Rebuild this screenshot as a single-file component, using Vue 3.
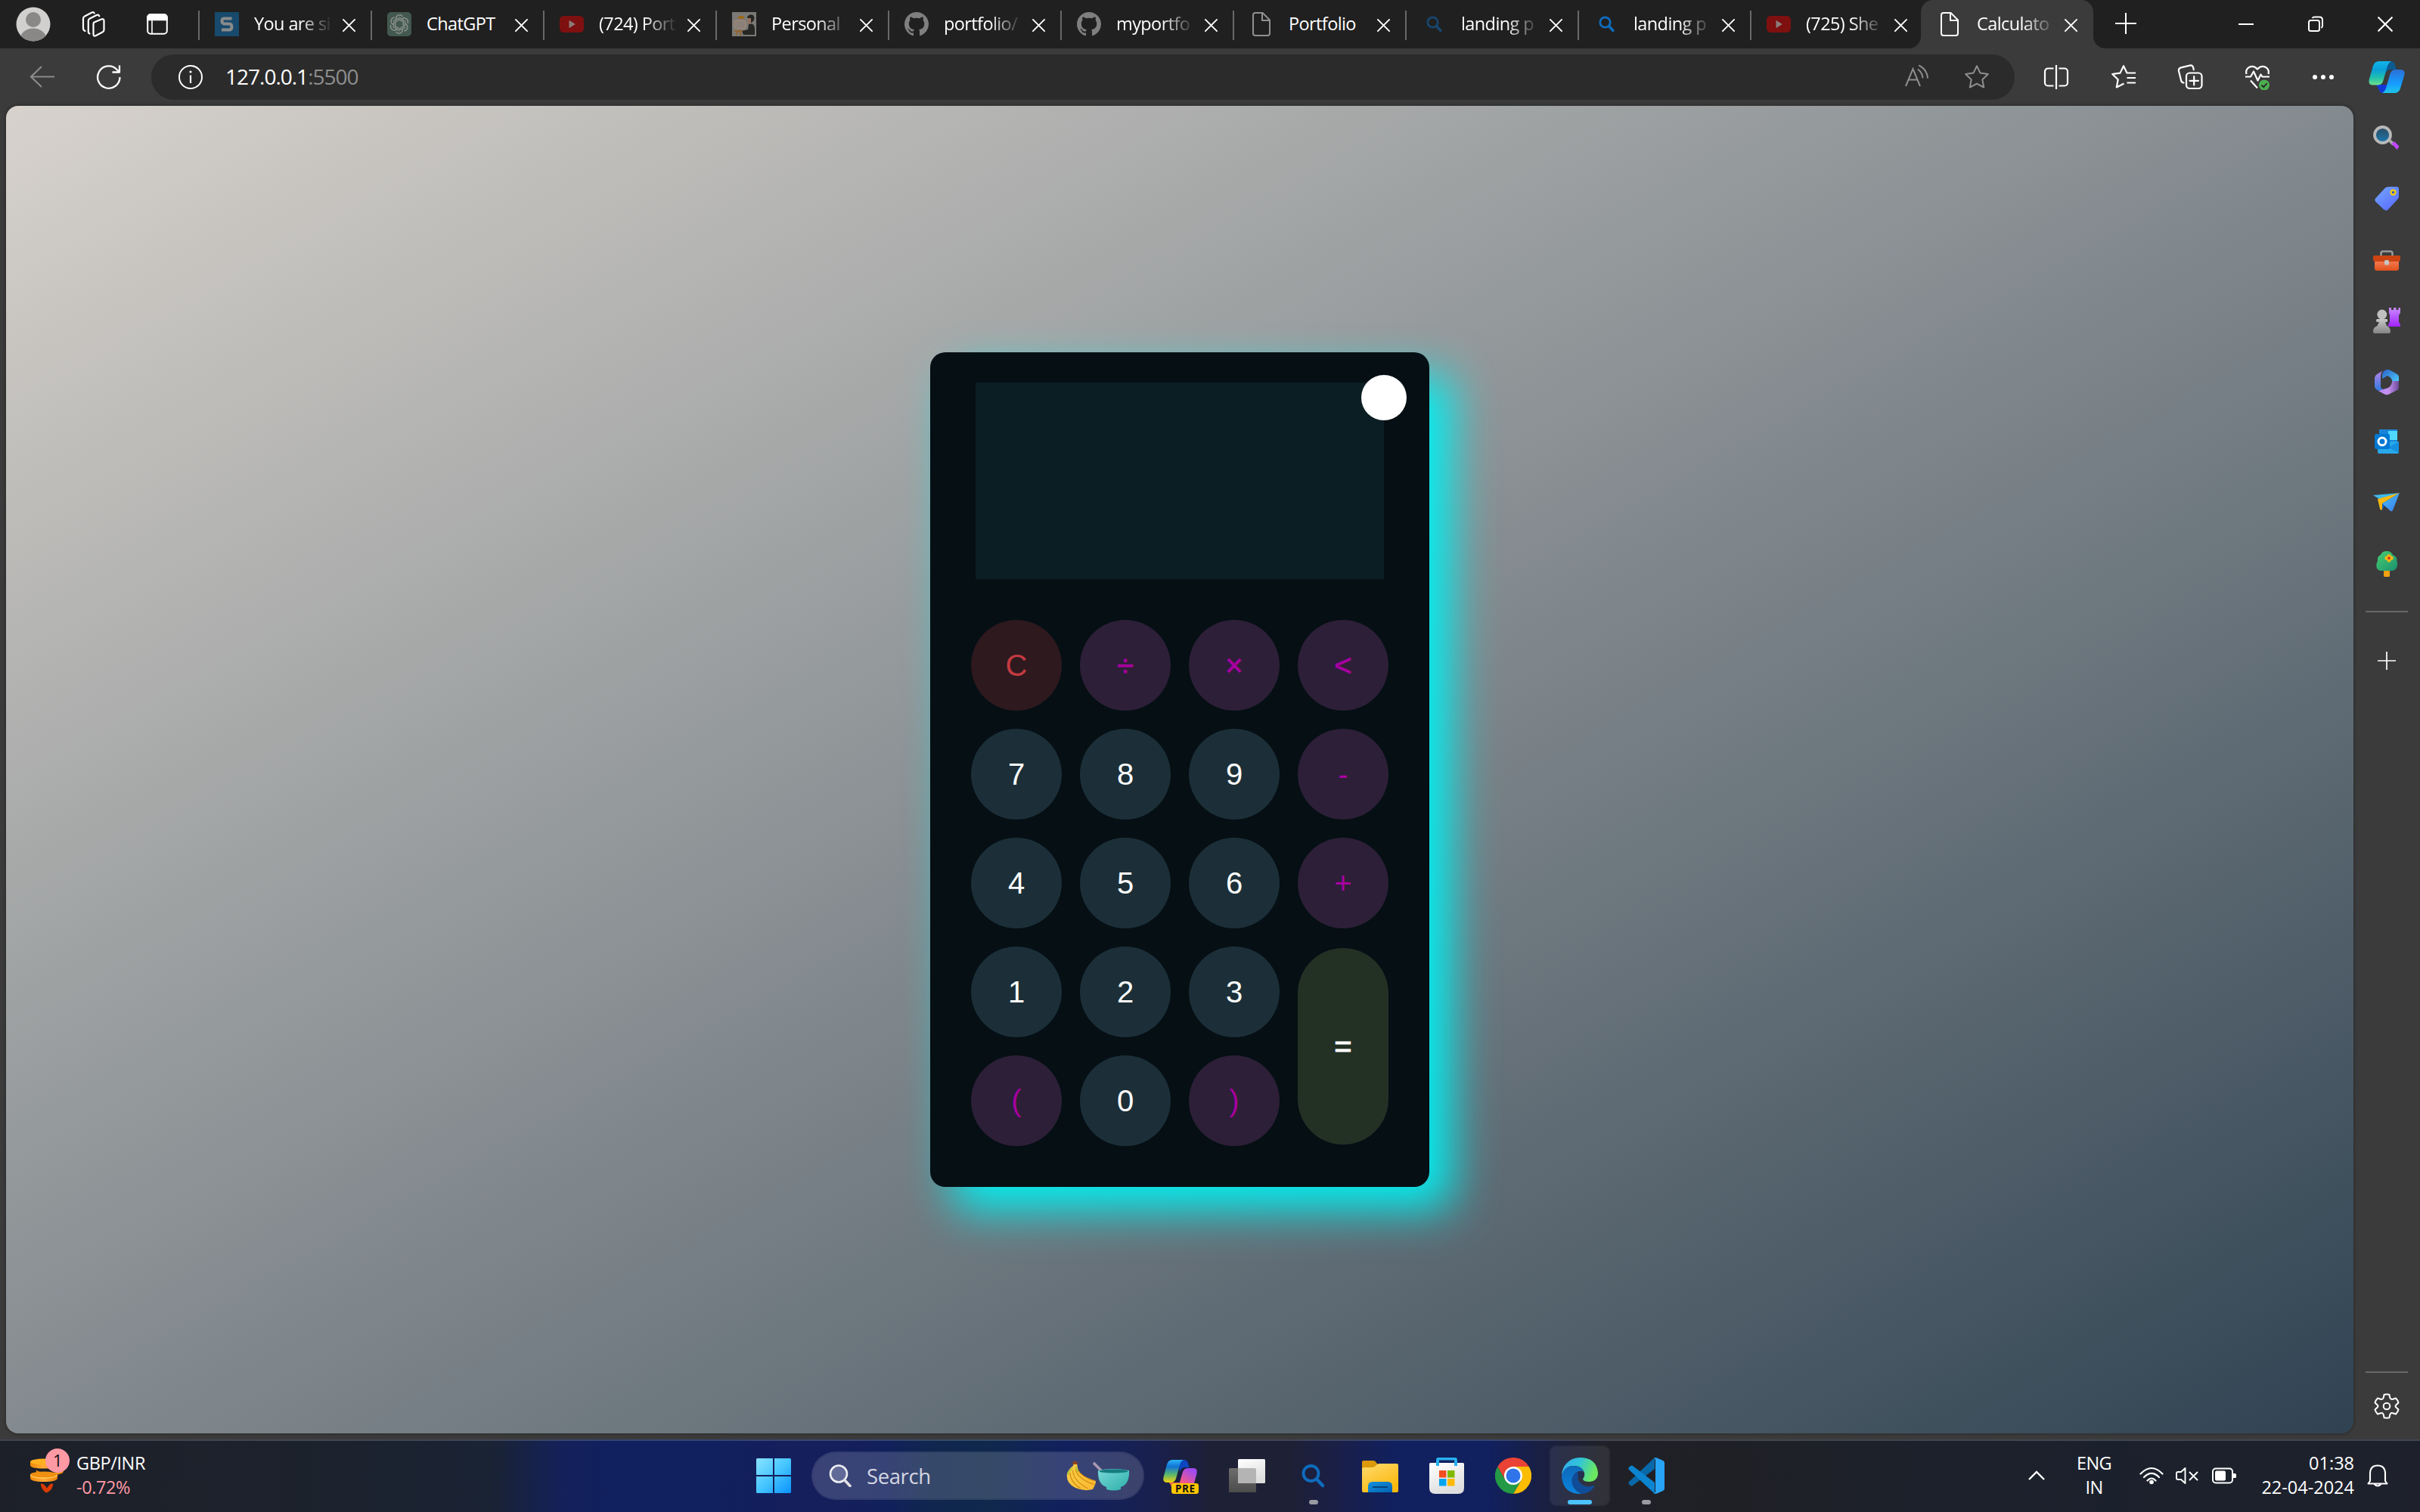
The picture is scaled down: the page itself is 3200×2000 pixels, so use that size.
<script setup>
const tabs = [
  { title: 'You are si', icon: 'fav-s' },
  { title: 'ChatGPT', icon: 'fav-gpt' },
  { title: '(724) Port', icon: 'fav-yt' },
  { title: 'Personal', icon: 'fav-person' },
  { title: 'portfolio/', icon: 'fav-github' },
  { title: 'myportfo', icon: 'fav-github' },
  { title: 'Portfolio', icon: 'fav-page', dim: true },
  { title: 'landing p', icon: 'fav-search', dim: true },
  { title: 'landing p', icon: 'fav-search' },
  { title: '(725) She', icon: 'fav-yt' },
  { title: 'Calculato', icon: 'fav-page', active: true }
]

const keys = [
  { label: 'C', kind: 'clear' },
  { label: '÷', kind: 'op heavy' },
  { label: '×', kind: 'op heavy' },
  { label: '<', kind: 'op heavy' },
  { label: '7' },
  { label: '8' },
  { label: '9' },
  { label: '-', kind: 'op' },
  { label: '4' },
  { label: '5' },
  { label: '6' },
  { label: '+', kind: 'op' },
  { label: '1' },
  { label: '2' },
  { label: '3' },
  { label: '=', kind: 'equals heavy' },
  { label: '(', kind: 'op' },
  { label: '0' },
  { label: ')', kind: 'op' }
]

const sideApps = ['side-search', 'side-tag', 'side-case', 'side-chess', 'side-m365', 'side-outlook', 'side-plane', 'side-tree']

const taskApps = [
  { icon: 'task-copilot' },
  { icon: 'task-view' },
  { icon: 'task-search', running: true },
  { icon: 'task-folder' },
  { icon: 'task-store' },
  { icon: 'task-chrome' },
  { icon: 'task-edge', active: true },
  { icon: 'task-code', running: true }
]
</script>

<template>
  <div class="screen">
    <svg class="sprite" aria-hidden="true">
      <defs>
        <linearGradient id="g-cop1" x1="0" y1="0" x2="0" y2="1">
          <stop offset="0" stop-color="#12b5ea" /><stop offset=".35" stop-color="#0a9ed8" /><stop offset=".7" stop-color="#22c1ac" /><stop offset="1" stop-color="#6fe08a" />
        </linearGradient>
        <linearGradient id="g-cop2" x1="0" y1="0" x2="0" y2="1">
          <stop offset="0" stop-color="#2b6fd6" /><stop offset=".6" stop-color="#159cff" /><stop offset="1" stop-color="#1fc4e8" />
        </linearGradient>
        <linearGradient id="g-pre1" x1="0" y1="0" x2="0" y2="1">
          <stop offset="0" stop-color="#2bb4f5" /><stop offset=".3" stop-color="#1173d6" /><stop offset=".65" stop-color="#5bb86c" /><stop offset="1" stop-color="#f5d00a" />
        </linearGradient>
        <linearGradient id="g-pre2" x1="0" y1="1" x2=".6" y2="0">
          <stop offset="0" stop-color="#ff8a4a" /><stop offset=".45" stop-color="#f0588c" /><stop offset="1" stop-color="#a04bf0" />
        </linearGradient>
        <linearGradient id="g-purple" x1="0" y1="0" x2="0" y2="1">
          <stop offset="0" stop-color="#c88cff" /><stop offset="1" stop-color="#a222ff" />
        </linearGradient>
        <linearGradient id="g-tag" x1="0" y1="0" x2=".8" y2="1">
          <stop offset="0" stop-color="#74a8ff" /><stop offset="1" stop-color="#5a6cff" />
        </linearGradient>
        <linearGradient id="g-case" x1="0" y1="0" x2="0" y2="1">
          <stop offset="0" stop-color="#f58058" /><stop offset="1" stop-color="#e0501c" />
        </linearGradient>
        <linearGradient id="g-gray" x1="0" y1="0" x2="0" y2="1">
          <stop offset="0" stop-color="#c8c8c8" /><stop offset="1" stop-color="#848484" />
        </linearGradient>
        <linearGradient id="g-lens" x1="0" y1="0" x2="0" y2="1">
          <stop offset="0" stop-color="#2c4a60" /><stop offset="1" stop-color="#1a78b0" />
        </linearGradient>
        <linearGradient id="g-m1" x1="0" y1="0" x2="0" y2="1">
          <stop offset="0" stop-color="#b87fe8" /><stop offset="1" stop-color="#2f7ce0" />
        </linearGradient>
        <linearGradient id="g-m2" x1="0" y1="0" x2="1" y2="1">
          <stop offset="0" stop-color="#2a60c8" /><stop offset="1" stop-color="#4fd8ff" />
        </linearGradient>
        <linearGradient id="g-m3" x1="0" y1="0" x2="1" y2="0">
          <stop offset="0" stop-color="#b88af5" /><stop offset=".5" stop-color="#c590f0" /><stop offset="1" stop-color="#6a4a98" />
        </linearGradient>
        <linearGradient id="g-tree" x1="0" y1="0" x2="1" y2="1">
          <stop offset="0" stop-color="#48d070" /><stop offset="1" stop-color="#1a9070" />
        </linearGradient>
        <linearGradient id="g-plane" x1="0" y1="0" x2="1" y2="1">
          <stop offset="0" stop-color="#48c4f0" /><stop offset="1" stop-color="#3a78f0" />
        </linearGradient>
        <linearGradient id="g-win" gradientUnits="userSpaceOnUse" x1="0" y1="0" x2="46" y2="46">
          <stop offset="0" stop-color="#8ae2ff" /><stop offset=".5" stop-color="#46c6ff" /><stop offset="1" stop-color="#0a92ff" />
        </linearGradient>
        <linearGradient id="g-folder" x1="0" y1="0" x2=".6" y2="1">
          <stop offset="0" stop-color="#ffdc70" /><stop offset="1" stop-color="#fbb80c" />
        </linearGradient>
        <linearGradient id="g-folder2" x1="0" y1="0" x2="1" y2="1">
          <stop offset="0" stop-color="#1592dc" /><stop offset="1" stop-color="#0462b4" />
        </linearGradient>
        <linearGradient id="g-store" x1="0" y1="0" x2=".4" y2="1">
          <stop offset="0" stop-color="#ffffff" /><stop offset="1" stop-color="#dedede" />
        </linearGradient>
        <linearGradient id="g-edge1" x1="0" y1="0" x2="1" y2=".3">
          <stop offset="0" stop-color="#35a8ee" /><stop offset=".5" stop-color="#30c4d8" /><stop offset="1" stop-color="#6be860" />
        </linearGradient>
        <linearGradient id="g-edge2" x1="0" y1="0" x2="0" y2="1">
          <stop offset="0" stop-color="#0f68b8" /><stop offset="1" stop-color="#0a84e0" />
        </linearGradient>
        <linearGradient id="g-bowl" x1="0" y1="0" x2="1" y2="1">
          <stop offset="0" stop-color="#78d8d8" /><stop offset="1" stop-color="#2eb0a8" />
        </linearGradient>
        <linearGradient id="g-banana" x1="0" y1="0" x2="1" y2="1">
          <stop offset="0" stop-color="#f8d048" /><stop offset="1" stop-color="#f8b830" />
        </linearGradient>
        <linearGradient id="g-coin" x1="0" y1="0" x2="1" y2="0">
          <stop offset="0" stop-color="#f08808" /><stop offset=".5" stop-color="#ffac38" /><stop offset="1" stop-color="#e88008" />
        </linearGradient>
        <linearGradient id="g-tv" x1="0" y1="0" x2="0" y2="1">
          <stop offset="0" stop-color="#6c6c6c" /><stop offset="1" stop-color="#4c4c4c" />
        </linearGradient>
      </defs>

      <symbol id="fav-s" viewBox="0 0 32 32">
        <rect width="32" height="32" fill="#174a6c" />
        <path d="M22.500 8.500H12.500q-3 0-3 3.200t3 3.800h6.500q3.500 0 3.500 4t-3.500 4H9" fill="none" stroke="#8a8a8a" stroke-width="4" />
      </symbol>
      <symbol id="fav-gpt" viewBox="0 0 32 32">
        <rect width="32" height="32" rx="5" fill="#43594f" />
        <g fill="none" stroke="#858c8a" stroke-width="1.600">
          <path id="petal" d="M20.500 12.500l-5.800-3.400q-1-.6-2 0L8 12M11.600 9.800V8.500a5 5 0 0 1 9-2.600" />
          <use href="#petal" transform="rotate(60 16 16)" />
          <use href="#petal" transform="rotate(120 16 16)" />
          <use href="#petal" transform="rotate(180 16 16)" />
          <use href="#petal" transform="rotate(240 16 16)" />
          <use href="#petal" transform="rotate(300 16 16)" />
        </g>
      </symbol>
      <symbol id="fav-yt" viewBox="0 0 32 32">
        <rect y="5" width="32" height="22" rx="5.500" fill="#7e1010" />
        <path d="M12.500 10.800v10.400l8.300-5.200z" fill="#8c7c7c" />
      </symbol>
      <symbol id="fav-person" viewBox="0 0 32 32">
        <rect width="32" height="32" fill="#7c7a76" />
        <rect x="8" y="5" width="8" height="4" rx="2" fill="#9b6a18" />
        <rect x="3" y="11" width="15" height="11" rx="2" fill="#8c8078" stroke="#a48c78" stroke-width="1" />
        <path d="M20 6q3-4 8-2 3 4 0 8-3 3-5 2z" fill="#282624" />
        <path d="M21 8h4v7h-4z" fill="#98735c" />
        <path d="M22 16q7-2 8 5v9H15l-2-5 8-2z" fill="#262624" />
        <path d="M3 25h11M8 25l-3 6M11 25v6" stroke="#9a6020" stroke-width="1.500" />
      </symbol>
      <symbol id="fav-github" viewBox="0 0 16 16">
        <path fill="#7f7f7f" d="M8 0C3.580 0 0 3.580 0 8c0 3.540 2.290 6.530 5.470 7.590.4.070.55-.17.55-.38 0-.19-.01-.82-.01-1.490-2.010.37-2.530-.49-2.690-.94-.09-.23-.48-.94-.82-1.130-.28-.15-.68-.52-.01-.53.63-.01 1.080.58 1.230.82.72 1.210 1.870.87 2.330.66.070-.52.28-.87.51-1.070-1.780-.2-3.640-.89-3.640-3.950 0-.87.31-1.590.82-2.150-.08-.2-.36-1.020.08-2.120 0 0 .67-.21 2.200.82.64-.18 1.320-.27 2-.27s1.360.09 2 .27c1.530-1.040 2.200-.82 2.200-.82.44 1.100.16 1.920.08 2.120.51.56.82 1.270.82 2.150 0 3.070-1.870 3.750-3.650 3.950.29.25.54.73.54 1.480 0 1.070-.01 1.930-.01 2.200 0 .21.15.46.55.38A8.010 8.010 0 0 0 16 8c0-4.420-3.580-8-8-8z" />
      </symbol>
      <symbol id="fav-page" viewBox="0 0 32 32">
        <path d="M8 1h9.500L27 10.500V28a3 3 0 0 1-3 3H8a3 3 0 0 1-3-3V4a3 3 0 0 1 3-3zM17 1.500V11h9.500" fill="none" stroke="currentColor" stroke-width="2" stroke-linejoin="round" />
      </symbol>
      <symbol id="fav-search" viewBox="0 0 32 32">
        <circle cx="14.500" cy="13.500" r="6.700" fill="none" stroke="#0f6cbd" stroke-width="2.800" />
        <path d="M19.500 18.500l5.500 6" stroke="#0f6cbd" stroke-width="3.400" stroke-linecap="round" />
      </symbol>

      <symbol id="workspaces" viewBox="0 0 36 36">
        <g fill="none" stroke="#fff" stroke-width="2.200" stroke-linejoin="round" stroke-linecap="round">
          <path d="M19.500 15.500l9.500-4q3.500-1.200 3.500 2v12q0 2-2 3l-9 4.700q-3 1.200-3-2V18q0-1.800 1-2.500z" />
          <path d="M13.500 30.500q-1.700-.5-1.700-3V13.500q0-2 2-3l9-4.500q2.800-1 3.500 1.500" />
          <path d="M7.500 27q-2.500-1-2.500-4V10.500q0-2 2-3l9.500-5q2.500-1 3.200 1" />
        </g>
      </symbol>
      <symbol id="tab-actions" viewBox="0 0 28 28">
        <rect x="1.200" y="1.200" width="25.600" height="25.600" rx="4" fill="none" stroke="#fff" stroke-width="2" />
        <path d="M1 8.500V5a4 4 0 0 1 4-4h18a4 4 0 0 1 4 4v3.500zM7 8v19" fill="#fff" stroke="#fff" stroke-width="1.600" />
      </symbol>
      <symbol id="cross" viewBox="0 0 20 20">
        <path d="M2 2l16 16M18 2L2 18" stroke="#fff" stroke-width="2" stroke-linecap="round" />
      </symbol>
      <symbol id="plus" viewBox="0 0 28 28">
        <path d="M14 0v28M0 14h28" stroke="#fff" stroke-width="2" />
      </symbol>
      <symbol id="restore" viewBox="0 0 22 22">
        <g fill="none" stroke="#fff" stroke-width="2">
          <rect x="2" y="6" width="14" height="14" rx="2.500" />
          <path d="M6.500 3q1-1.500 3-1.500H16q4 0 4 4V13q0 2-1.500 3" />
        </g>
      </symbol>

      <symbol id="back" viewBox="0 0 34 32">
        <path d="M33 15.500H2M16 2L2 15.500 16 29" fill="none" stroke="#8a8a8a" stroke-width="2.200" />
      </symbol>
      <symbol id="reload" viewBox="0 0 34 34">
        <path d="M31.500 17A14.700 14.700 0 1 1 27.500 7l3 3M31 1.500v9h-9.500" fill="none" stroke="#fff" stroke-width="2.300" stroke-linejoin="round" />
      </symbol>
      <symbol id="info" viewBox="0 0 34 34">
        <circle cx="17" cy="17" r="15" fill="none" stroke="#fff" stroke-width="2" />
        <path d="M17 14.500V25" stroke="#fff" stroke-width="2.200" />
        <circle cx="17" cy="10" r="1.600" fill="#fff" />
      </symbol>
      <symbol id="read-aloud" viewBox="0 0 34 34">
        <g fill="none" stroke="#8e8e8e" stroke-width="2">
          <path d="M2 29L11.500 6 21 29M5.500 20.500h12" />
          <path d="M18.500 7q5 3.800 6 10.500M20 1.800q10 5.200 11 16" stroke-linecap="round" />
        </g>
      </symbol>
      <symbol id="star" viewBox="0 0 34 34">
        <path d="M17 2.200l4.500 9.400 10.300 1.400-7.500 7.200 1.900 10.300L17 25.600l-9.200 4.900 1.900-10.300-7.500-7.200 10.300-1.400z" fill="none" stroke="#8e8e8e" stroke-width="2" stroke-linejoin="round" />
      </symbol>
      <symbol id="split" viewBox="0 0 34 34">
        <g fill="none" stroke="#fff" stroke-width="2.200">
          <path d="M17 1v32M13.500 5.500H6a4 4 0 0 0-4 4v15a4 4 0 0 0 4 4h7.500M20.500 5.500H28a4 4 0 0 1 4 4v15a4 4 0 0 1-4 4h-7.500" />
        </g>
      </symbol>
      <symbol id="favorites" viewBox="0 0 34 34">
        <g fill="none" stroke="#fff" stroke-width="2.200" stroke-linejoin="round">
          <path d="M33 11.500H21.500L17 2.200l-4.500 9.400L2.200 13l7.500 7.200-1.900 10.300L17.500 25.500M21.500 18H33M21.500 24.500H33" />
        </g>
      </symbol>
      <symbol id="collections" viewBox="0 0 34 34">
        <g fill="none" stroke="#fff" stroke-width="2.200" stroke-linejoin="round" stroke-linecap="round">
          <rect x="12" y="11.500" width="20.500" height="20.500" rx="4.500" />
          <path d="M22.200 16v11.500M16.500 21.800H28M8.500 24.500q-3-.5-3.500-3.500L2 9q-.6-3.500 3-4.600L16.500 1.600q3.500-.8 4.600 2.600l.7 3" />
        </g>
      </symbol>
      <symbol id="health" viewBox="0 0 34 34">
        <g fill="none" stroke="#fff" stroke-width="2.200" stroke-linejoin="round">
          <path d="M2.500 13Q1 7 6 4q6-3 11 2.500Q22 1 28 4q5 3 3.500 9" />
          <path d="M1 16.500h7l4-7 5.500 12 4-8 2 3H33M8 21.500l9 10" />
        </g>
        <circle cx="26" cy="27.500" r="7" fill="#4caf50" />
        <path d="M22.500 27.500l2.700 2.700 4.600-5" fill="none" stroke="#252525" stroke-width="1.800" />
      </symbol>
      <symbol id="copilot" viewBox="0 0 48 44">
        <path d="M22 1h7q5 0 6 5l2 6h-8q-5 0-6.500 6z" fill="#0b5a92" />
        <path d="M10 32h16l-4 11h-3q-4 0-5-4z" fill="#1238d8" />
        <path d="M14 1h16q-4 2-5.500 8L19 28q-2 4.500-7 4.500H5Q-.8 32 .8 25L6 7q2-6 8-6z" fill="url(#g-cop1)" />
        <path d="M34 43H18q4-2 5.500-8L29 16q2-4 7-4h7q5.800.5 4.200 7.500L42 37q-2 6-8 6z" fill="url(#g-cop2)" />
      </symbol>

      <symbol id="side-search" viewBox="0 0 36 36">
        <path d="M22 21l5 5" stroke="#a8a8a8" stroke-width="4" />
        <path d="M24.500 25l3.500-3 6.500 6.500-3 4.500z" fill="#c048ff" />
        <circle cx="12.500" cy="13.500" r="10.500" fill="url(#g-lens)" stroke="#b8b8b8" stroke-width="3.800" />
      </symbol>
      <symbol id="side-tag" viewBox="0 0 36 36">
        <path d="M16 3.500q2-1.500 5-1.500h10q3 0 3 3v10q0 2-2 4L20.500 31.500q-3 3.500-6.500.5L4 22.500q-3-3-.5-5.500z" fill="url(#g-tag)" />
        <circle cx="26.500" cy="9.500" r="3" fill="#4058c0" stroke="#f2cc10" stroke-width="2.400" />
      </symbol>
      <symbol id="side-case" viewBox="0 0 36 36">
        <path d="M10.500 12V9q0-2.500 2.500-2.500h10q2.500 0 2.500 2.500v3" fill="none" stroke="#9a9a9a" stroke-width="2.600" />
        <path d="M2 18h32v11q0 3-3 3H5q-3 0-3-3z" fill="url(#g-case)" />
        <path d="M1.500 12h33q1.500 0 1.500 1.500V17q0 3-3 3H3q-3 0-3-3v-3.500Q0 12 1.500 12z" fill="#cc4412" />
        <rect x="15" y="18" width="6" height="6.500" rx="1.500" fill="#c4c4c4" />
      </symbol>
      <symbol id="side-chess" viewBox="0 0 36 36">
        <path d="M21 1h3v3h3V1h3.500v3h3V1H36v7l-2 3v9l2 3v3H20v-3l2-3v-9l-1-3z" fill="url(#g-purple)" />
        <circle cx="11.800" cy="10" r="6.400" fill="#c0c0c0" />
        <path d="M5 16h13.500q1.500 2 0 4H16l2 5q5 2 5 7.500Q23 35 21 35H2q-2 0-2-2.500Q0 27 5.500 25L8 20H5q-2-2 0-4z" fill="url(#g-gray)" />
      </symbol>
      <symbol id="side-m365" viewBox="0 0 36 36">
        <path d="M14 4q4-3.500 8-1.500l10 5.500q2 1.500 2 4v10l-9-5q0-4-6-7l-7 4V8z" fill="url(#g-m2)" />
        <path d="M13.500 3Q10 5 10 11v13q0 3 4 4l-7 2q-5-3-5-6V13q0-3 3-5z" fill="url(#g-m1)" />
        <path d="M34 17v8q0 3-2 4L21 34.500q-3 1.500-6 0L7 30l13-4q5-3 5-9z" fill="url(#g-m3)" />
      </symbol>
      <symbol id="side-outlook" viewBox="0 0 36 36">
        <rect x="8" y="1" width="24" height="18" fill="#1a84d8" />
        <rect x="20" y="3" width="12" height="12" fill="#50d9ff" />
        <path d="M6 17h28v14q0 2-2 2H8q-2 0-2-2z" fill="#28a8ea" />
        <path d="M34 17v15L20 25z" fill="#1490df" />
        <rect x="2" y="7" width="20" height="20" rx="2" fill="#0078d4" />
        <circle cx="12" cy="17" r="5" fill="none" stroke="#fff" stroke-width="3" />
      </symbol>
      <symbol id="side-plane" viewBox="0 0 36 36">
        <path d="M0 8L35 5 11 15z" fill="#40b8e8" />
        <path d="M6 13L35 5 12 19v8q-2 1.500-3-1z" fill="#f8b810" />
        <path d="M12 19l4 3-4 5z" fill="#1458c0" />
        <path d="M12 19L35 5 26 28q-1 2-3 1z" fill="url(#g-plane)" />
      </symbol>
      <symbol id="side-tree" viewBox="0 0 36 36">
        <rect x="14" y="26" width="8" height="9" rx="1.500" fill="#f0a010" />
        <path d="M18 1q6 0 8 5 6 2 5.500 8 1.500 4 0 8-2 5-7 5h-13q-6 0-7-5-1-4 1.500-8Q5 8 10 6q2-5 8-5z" fill="url(#g-tree)" />
        <g fill="#f8b818"><circle cx="21" cy="7.500" r="2.600" /><circle cx="21" cy="13" r="2.600" /><circle cx="18" cy="10.200" r="2.600" /><circle cx="24" cy="10.200" r="2.600" /></g>
        <circle cx="21" cy="10.200" r="2" fill="#d83a18" />
      </symbol>
      <symbol id="gear" viewBox="0 0 34 34">
        <path d="M13.600 1.800Q17 .9 20.400 1.800l1 4.400q1 2.200 3.600 1.600l4-1.300q2.600 2.500 3.500 6l-3.200 3q-1.500 1.500 0 3l3.200 3q-.9 3.500-3.500 6l-4-1.300q-2.600-.6-3.600 1.600l-1 4.400q-3.400.9-6.800 0l-1-4.400q-1-2.200-3.600-1.600l-4 1.300q-2.600-2.500-3.500-6l3.200-3q1.500-1.500 0-3l-3.200-3q.9-3.500 3.500-6l4 1.300q2.600.6 3.600-1.600z" fill="none" stroke="#fff" stroke-width="2" stroke-linejoin="round" />
        <circle cx="17" cy="17" r="4.300" fill="none" stroke="#fff" stroke-width="2" />
      </symbol>

      <symbol id="coins" viewBox="0 0 46 32">
        <path d="M8 15q2 4 18 4t18-5v3q0 5-18 5T8 18z" fill="url(#g-coin)" />
        <path d="M0 4.500h36V9q0 4.500-18 4.500T0 9z" fill="url(#g-coin)" />
        <ellipse cx="18" cy="4.500" rx="18" ry="4" fill="#ffb020" />
        <path d="M0 21.500h36V26q0 5-18 5T0 26z" fill="url(#g-coin)" />
        <ellipse cx="18" cy="21.500" rx="18" ry="4" fill="#f09010" />
        <path d="M0 22q2 4 18 4t18-4" fill="none" stroke="#ffca60" stroke-width="1.400" />
      </symbol>
      <symbol id="windows" viewBox="0 0 46 46">
        <path d="M1.500 0H22v22H0V1.500Q0 0 1.500 0zM24 0h20.500Q46 0 46 1.500V22H24zM0 24h22v22H1.500Q0 46 0 44.500zM24 24h22v20.500q0 1.500-1.500 1.500H24z" fill="url(#g-win)" />
      </symbol>
      <symbol id="glass" viewBox="0 0 30 30">
        <circle cx="13" cy="12.500" r="11" fill="#626a98" stroke="#eceef2" stroke-width="2.600" />
        <path d="M21 21l7 7.500" stroke="#e0e2e6" stroke-width="3.600" stroke-linecap="round" />
      </symbol>
      <symbol id="smoothie" viewBox="0 0 84 40">
        <path d="M10 3h4l1 7q2 8 11 12 7 3 13 5 0 4-2 7l-2 4q-12 3-23-2Q-1 30 1 17q3-7 8-10z" fill="url(#g-banana)" />
        <path d="M5 16q0 12 14 21M8.500 13q1 14 20 24M12 12q4 13 26 20M15 12q5 10 23 15" fill="none" stroke="#d88c10" stroke-width="1.200" />
        <path d="M8 10Q3 14 2 19M13 8q0 5 3 7" stroke="#b4c438" stroke-width="2" fill="none" />
        <path d="M9 1h5l1 4H8z" fill="#8a4420" />
        <path d="M37 4l13 13" stroke="#a898b0" stroke-width="3.600" stroke-linecap="round" />
        <path d="M42 13q20-4 41 0 1 18-11 22v3q-9 3-19 0v-3q-12-4-11-22z" fill="url(#g-bowl)" />
        <ellipse cx="62.500" cy="14" rx="19" ry="2.600" fill="#157c80" />
      </symbol>

      <symbol id="task-copilot" viewBox="0 0 48 48">
        <path d="M21 3h7q5 0 6 5l2 5h-7q-4 0-6 6z" fill="#0c46c0" />
        <path d="M13 3h15q-4 2-5 7l-5 18q-2 5-6 5H6q-6 0-4.500-7L6 9q2-6 7-6z" fill="url(#g-pre1)" />
        <path d="M9 33h14l-3 9h-3q-4 0-5-4z" fill="#f06a50" />
        <path d="M33 44H17q4-2 5-8l5-17q2-5 7-5h7q6 0 4.500 7L41 38q-2 6-8 6z" fill="url(#g-pre2)" />
        <rect x="12" y="34" width="36" height="14" rx="3.500" fill="#ffc700" />
        <text x="30.300" y="46" text-anchor="middle" font-family="Open Sans, sans-serif" font-weight="700" font-size="13.500" letter-spacing=".5" fill="#111">PRE</text>
      </symbol>
      <symbol id="task-view" viewBox="0 0 48 48">
        <rect x="0" y="14" width="36" height="32" rx="1.500" fill="url(#g-tv)" />
        <rect x="12" y="2" width="36" height="32" rx="1.500" fill="url(#g-store)" />
        <path d="M12 14h22.500q1.500 0 1.500 1.500V34H12z" fill="#b4b4b4" />
      </symbol>
      <symbol id="task-search" viewBox="0 0 48 48">
        <circle cx="20.500" cy="21" r="10" fill="none" stroke="#0f6cbd" stroke-width="3.800" />
        <path d="M28.500 29l7.500 8" stroke="#0f6cbd" stroke-width="4.600" stroke-linecap="round" />
      </symbol>
      <symbol id="task-folder" viewBox="0 0 48 48">
        <path d="M0 6q0-2 2-2h13q2 0 3 1.500l3 4V18H0z" fill="#dc9a08" />
        <path d="M0 15q0-2 2-2h12q2 0 4-2l1-1q1-2 4-2h23q2 0 2 2v34q0 2-2 2H2q-2 0-2-2z" fill="url(#g-folder)" />
        <path d="M8 46V38q0-6 6-6h20q6 0 6 6v8z" fill="url(#g-folder2)" />
        <path d="M14 39h20" stroke="#06437c" stroke-width="2" />
      </symbol>
      <symbol id="task-store" viewBox="0 0 48 48">
        <path d="M1 8.500Q1 7 2.500 7h43Q47 7 47 8.500V40q0 8-8 8H9q-8 0-8-8z" fill="url(#g-store)" />
        <path d="M12 11V3.500Q12 1.500 14 1.500h20q2 0 2 2V11" fill="none" stroke="#28b0f0" stroke-width="4" />
        <path d="M14 17h9.500v9.500H14z" fill="#f25022" /><path d="M25 17h9.500v9.500H25z" fill="#7fba00" />
        <path d="M14 28h9.500v9.500H14z" fill="#00a4ef" /><path d="M25 28h9.500v9.500H25z" fill="#ffb900" />
      </symbol>
      <symbol id="task-chrome" viewBox="0 0 48 48">
        <path d="M3.200 12A24 24 0 0 1 44.800 12H24L13.600 30z" fill="#ea4335" />
        <path d="M44.800 12A24 24 0 0 1 24 48L34.400 30 24 12z" fill="#fbbc04" />
        <path d="M24 48A24 24 0 0 1 3.200 12L13.600 30h20.800z" fill="#249a46" />
        <circle cx="24" cy="24" r="12" fill="#fff" /><circle cx="24" cy="24" r="9.500" fill="#2f74ea" />
      </symbol>
      <symbol id="task-edge" viewBox="0 0 48 48">
        <path d="M0 24A24 24 0 0 1 24 0q22 0 24 20 0 11-11 12-9 0-9-4 3-3 2-8-3-9-14-9Q4 11 0 24z" fill="url(#g-edge1)" />
        <path d="M0 25Q3 11 15 11q13 0 15 10 0-4-7-3-8 2-9 12 0 13 13 18Q2 49 0 25z" fill="url(#g-edge2)" />
        <path d="M20 19q-9 7-6 17 4 9 13 12 12-1 17-11-2 0-6 1-8 1-13-4-6-6-2-13z" fill="#104c98" />
        <path d="M22 19q6-1 7 3-2 2-1 7-8-4-6-10z" fill="#202f52" />
      </symbol>
      <symbol id="task-code" viewBox="0 0 48 48">
        <path d="M35 0v15L6 37q-1.500 1-3 0l-2-2q-1.500-1.500 0-3z" fill="#0868a8" />
        <path d="M35 48V33L6 11q-1.500-1-3 0l-2 2q-1.500 1.500 0 3z" fill="#0c84d0" />
        <path d="M34 1q2-1.500 4-.5L46 4q2 1 2 3v34q0 2-2 3l-8 3.500q-2 1-4-.5 2 0 2-3V4q0-3-2-3z" fill="#28a4f4" />
      </symbol>

      <symbol id="chevron" viewBox="0 0 24 14">
        <path d="M2 12L12 2l10 10" fill="none" stroke="#fff" stroke-width="2.400" />
      </symbol>
      <symbol id="wifi" viewBox="0 0 32 24">
        <g fill="none" stroke="#fff" stroke-width="2.200" stroke-linecap="round">
          <path d="M1.500 9.500q14.500-15 29 0M6 14q10-10 20 0M10.500 18.500q5.500-6 11 0" />
        </g>
        <circle cx="16" cy="20.500" r="2.800" fill="#fff" />
      </symbol>
      <symbol id="mute" viewBox="0 0 30 24">
        <path d="M12.500 2v20L7 17H3q-2 0-2-2V9q0-2 2-2h4zM18.500 7.500l10 10M28.500 7.500l-10 10" fill="none" stroke="#fff" stroke-width="1.900" stroke-linejoin="round" stroke-linecap="round" />
      </symbol>
      <symbol id="battery" viewBox="0 0 32 22">
        <rect x="1" y="1.500" width="26" height="19" rx="4" fill="none" stroke="#fff" stroke-width="2" />
        <rect x="4" y="4.500" width="14" height="13" rx="2" fill="#fff" />
        <path d="M28 8h2.500q1.500 0 1.500 1.500v3q0 1.500-1.500 1.500H28z" fill="#fff" />
      </symbol>
      <symbol id="bell" viewBox="0 0 28 30">
        <path d="M4 22V11.500Q4.500 1.500 14 1.500t10 10V22l2.500 3.500h-25zM9.500 26q4.500 5 9 0" fill="none" stroke="#fff" stroke-width="2.100" stroke-linejoin="round" />
      </symbol>
    </svg>

    <header class="tabstrip">
      <svg class="avatar" viewBox="0 0 46 46">
        <clipPath id="avatar-clip"><circle cx="23" cy="23" r="22.500" /></clipPath>
        <g clip-path="url(#avatar-clip)">
          <rect width="46" height="46" fill="#d2d0ce" />
          <circle cx="23" cy="17" r="10" fill="#8a8886" />
          <ellipse cx="23" cy="42" rx="17" ry="13.500" fill="#8a8886" />
        </g>
      </svg>
      <svg class="workspaces"><use href="#workspaces" /></svg>
      <svg class="tab-actions"><use href="#tab-actions" /></svg>
      <div class="tabs">
        <div v-for="(tab, i) in tabs" :key="i" class="tab" :class="{ active: tab.active }">
          <svg class="favicon" :class="{ dim: tab.dim }"><use :href="'#' + tab.icon" /></svg>
          <span class="title">{{ tab.title }}</span>
          <svg class="tab-close"><use href="#cross" /></svg>
        </div>
      </div>
      <svg class="new-tab"><use href="#plus" /></svg>
      <div class="window-buttons">
        <i class="minimize"></i>
        <svg class="restore"><use href="#restore" /></svg>
        <svg class="win-close"><use href="#cross" /></svg>
      </div>
    </header>

    <div class="toolbar">
      <svg class="back"><use href="#back" /></svg>
      <svg class="reload"><use href="#reload" /></svg>
      <div class="address">
        <svg class="tool"><use href="#info" /></svg>
        <span class="url">127.0.0.1<em>:5500</em></span>
        <svg class="tool"><use href="#read-aloud" /></svg>
        <svg class="tool"><use href="#star" /></svg>
      </div>
      <div class="tools">
        <svg class="tool"><use href="#split" /></svg>
        <svg class="tool"><use href="#favorites" /></svg>
        <svg class="tool"><use href="#collections" /></svg>
        <svg class="tool"><use href="#health" /></svg>
        <span class="more"><i></i><i></i><i></i></span>
      </div>
      <svg class="copilot"><use href="#copilot" /></svg>
    </div>

    <main class="browser-body">
      <section class="page">
        <div class="calculator">
          <div class="display"></div>
          <div class="keypad">
            <button v-for="key in keys" :key="key.label" :class="key.kind">{{ key.label }}</button>
          </div>
          <span class="toggle"></span>
        </div>
      </section>
      <aside class="sidebar">
        <svg v-for="app in sideApps" :key="app" class="side-app"><use :href="'#' + app" /></svg>
        <hr />
        <svg class="side-plus"><use href="#plus" /></svg>
        <hr class="bottom" />
        <svg class="side-gear"><use href="#gear" /></svg>
      </aside>
    </main>

    <footer class="taskbar">
      <div class="widget">
        <div class="widget-icon">
          <svg class="coins"><use href="#coins" /></svg>
          <span class="badge">1</span>
          <svg class="down" viewBox="0 0 20 14"><path d="M1 1q4-2 9 6 5-8 9-6-1 8-8 12-1.500 1-3 0Q2 8 1 1z" fill="#d83b01" /></svg>
        </div>
        <div class="widget-text">
          <span>GBP/INR</span>
          <span class="loss">-0.72%</span>
        </div>
      </div>
      <svg class="start"><use href="#windows" /></svg>
      <div class="search">
        <svg class="glass"><use href="#glass" /></svg>
        <span>Search</span>
        <svg class="smoothie"><use href="#smoothie" /></svg>
      </div>
      <div class="apps">
        <div v-for="app in taskApps" :key="app.icon" class="app" :class="{ active: app.active, running: app.running }">
          <svg><use :href="'#' + app.icon" /></svg>
        </div>
      </div>
      <div class="tray">
        <svg class="chevron"><use href="#chevron" /></svg>
        <div class="lang"><span>ENG</span><span>IN</span></div>
        <svg class="wifi"><use href="#wifi" /></svg>
        <svg class="mute"><use href="#mute" /></svg>
        <svg class="battery"><use href="#battery" /></svg>
        <div class="clock"><span>01:38</span><span>22-04-2024</span></div>
        <svg class="bell"><use href="#bell" /></svg>
      </div>
    </footer>
  </div>
</template>

<style>
body {
  margin: 0;
  background: #3b3b3b;
}
</style>

<style scoped>
.screen {
  width: 3200px;
  height: 2000px;
  display: flex;
  flex-direction: column;
  overflow: hidden;
  background: #3b3b3b;
  color: #fff;
  font: 23.5px "Open Sans", "Noto Sans", sans-serif;
  letter-spacing: -0.6px;
}

.screen * {
  box-sizing: border-box;
}

svg {
  display: block;
  flex: none;
  overflow: visible;
}

.sprite {
  position: absolute;
  width: 0;
  height: 0;
}

/* tab strip */
.tabstrip {
  height: 64px;
  flex: none;
  display: flex;
  align-items: center;
  background: #202020;
}

.avatar {
  width: 46px;
  height: 46px;
  margin-left: 21px;
}

.workspaces {
  width: 36px;
  height: 36px;
  margin-left: 38px;
}

.tab-actions {
  width: 28px;
  height: 28px;
  margin-left: 53px;
}

.tabs {
  display: flex;
  height: 64px;
  margin-left: 40px;
}

.tab {
  position: relative;
  width: 228px;
  height: 64px;
  display: flex;
  align-items: center;
}

.tab::before {
  content: "";
  width: 2px;
  height: 39px;
  margin-top: 2px;
  background: #686868;
}

.tab.active::before {
  position: absolute;
  left: -2px;
  top: 0;
  width: 228px;
  height: 64px;
  margin: 0;
  border-radius: 16px 16px 0 0;
  background: #3b3b3b;
}

.tab.active::after {
  content: "";
  position: absolute;
  left: -18px;
  bottom: 0;
  width: 260px;
  height: 16px;
  background:
    radial-gradient(circle at 0 0, transparent 15.5px, #3b3b3b 16.5px) 0 0 / 16px 16px no-repeat,
    radial-gradient(circle at 100% 0, transparent 15.5px, #3b3b3b 16.5px) 100% 0 / 16px 16px no-repeat;
}

.favicon {
  width: 32px;
  height: 32px;
  margin-left: 20px;
  position: relative;
}

.favicon.dim {
  opacity: 0.5;
}

.title {
  position: relative;
  width: 104px;
  margin-left: 20px;
  margin-bottom: 2px;
  line-height: 40px;
  white-space: nowrap;
  -webkit-mask-image: linear-gradient(to right, #000 60px, transparent 104px);
  mask-image: linear-gradient(to right, #000 60px, transparent 104px);
}

.tab:nth-child(2) .title,
.tab:nth-child(7) .title {
  -webkit-mask-image: none;
  mask-image: none;
}

.tab-close {
  position: relative;
  width: 19px;
  height: 19px;
  margin: 2px 0 0 12px;
}

.tab.active .tab-close {
  margin-left: 11px;
}

.new-tab {
  width: 28px;
  height: 28px;
  margin-left: 27px;
  margin-bottom: 2px;
}

.window-buttons {
  margin-left: auto;
  margin-right: 35px;
  display: flex;
  align-items: center;
}

.minimize {
  width: 20px;
  height: 2px;
  background: #fff;
}

.restore {
  width: 22px;
  height: 22px;
  margin-left: 71px;
}

.win-close {
  width: 22px;
  height: 22px;
  margin-left: 70px;
}

/* toolbar */
.toolbar {
  height: 76px;
  flex: none;
  display: flex;
  align-items: center;
}

.back {
  width: 34px;
  height: 32px;
  margin-left: 39px;
}

.reload {
  width: 34px;
  height: 34px;
  margin-left: 54px;
}

.address {
  width: 2464px;
  height: 60px;
  margin-left: 39px;
  padding: 0 33px 0 35px;
  border-radius: 30px;
  background: #2b2b2b;
  display: flex;
  align-items: center;
}

.tool {
  width: 34px;
  height: 34px;
}

.url {
  flex: 1;
  margin-left: 29px;
  margin-bottom: 2px;
  font-size: 28px;
  letter-spacing: -1px;
}

.url em {
  font-style: normal;
  color: #8e8e8e;
}

.address .tool + .tool {
  margin-left: 45px;
}

.tools {
  display: flex;
  align-items: center;
  gap: 54.5px;
  margin-left: 38px;
}

.more {
  display: flex;
  gap: 5px;
  margin-left: 2px;
}

.more i {
  width: 6px;
  height: 6px;
  border-radius: 50%;
  background: #fff;
}

.copilot {
  width: 48px;
  height: 44px;
  margin-left: 46px;
}

/* page */
.browser-body {
  height: 1764px;
  flex: none;
  display: flex;
  padding: 0 0 8px 8px;
}

.page {
  width: 3104px;
  border-radius: 16px;
  display: flex;
  align-items: center;
  justify-content: center;
  background: linear-gradient(to bottom right, #d7d2cc, #304352);
  box-shadow: 0 0 5px rgba(0, 0, 0, 0.4);
  overflow: hidden;
}

.calculator {
  position: relative;
  width: 660px;
  height: 1104px;
  padding: 40px 54px 54px;
  border-radius: 20px;
  background: #050f14;
  box-shadow: 30px 30px 60px #00f0f2;
}

.display {
  width: 540px;
  height: 260px;
  margin: 0 6px 54px;
  background: #0b1e23;
}

.toggle {
  position: absolute;
  top: 30px;
  right: 30px;
  width: 60px;
  height: 60px;
  border-radius: 50%;
  background: #fff;
}

.keypad {
  display: grid;
  grid-template-columns: repeat(4, 120px);
  grid-auto-rows: 120px;
  gap: 24px;
}

.keypad button {
  border: 0;
  padding: 0;
  border-radius: 60px;
  background: #1c2f38;
  color: #fff;
  font: 40px "Liberation Sans", Arial, sans-serif;
}

.keypad .op {
  background: #2d1f37;
  color: #a6009f;
}

.keypad .clear {
  background: #2d191e;
  color: #c23a40;
}

.keypad .equals {
  grid-row: span 2;
  height: 260px;
  align-self: center;
  background: #233024;
}

.keypad .heavy {
  -webkit-text-stroke: 0.9px currentColor;
}

/* sidebar */
.sidebar {
  width: 88px;
  display: flex;
  flex-direction: column;
  align-items: center;
  padding-top: 25px;
}

.side-app {
  width: 36px;
  height: 36px;
  margin-bottom: 44.400px;
}

.sidebar hr {
  width: 56px;
  height: 2px;
  margin: 0;
  border: 0;
  background: #686868;
}

.side-plus {
  width: 24px;
  height: 24px;
  margin-top: 52px;
}

.sidebar hr.bottom {
  margin-top: auto;
}

.side-gear {
  width: 34px;
  height: 34px;
  margin: 27px 0 19px;
}

/* taskbar */
.taskbar {
  height: 96px;
  flex: none;
  display: flex;
  align-items: center;
  padding-bottom: 2px;
  border-top: 2px solid rgba(130, 140, 155, 0.35);
  background: linear-gradient(to right,
    #1d2029 0, #1c222c 400px, #1a2334 650px, #14215a 745px, #11205e 800px, #11205e 950px,
    #161f5c 1080px, #11205c 1170px, #10264e 1230px, #10284c 1310px, #11205e 1410px,
    #18204f 1520px, #1e2036 1600px, #1e2034 1700px, #1a1f48 1770px, #11205e 1840px,
    #11205e 1970px, #181f46 2030px, #202128 2120px, #1f2025 2260px, #1c212c 2600px, #1b212c 2800px, #1e212b 3200px);
}

.widget {
  width: 1000px;
  display: flex;
  align-items: center;
}

.widget-icon {
  position: relative;
  width: 61px;
  height: 52px;
  margin-left: 40px;
}

.coins {
  width: 46px;
  height: 32px;
  margin-top: 3px;
}

.badge {
  position: absolute;
  left: 20px;
  top: -10px;
  width: 32px;
  height: 32px;
  border-radius: 50%;
  background: #ff99a4;
  color: #111;
  font-size: 22px;
  line-height: 31px;
  text-align: center;
}

.down {
  position: absolute;
  left: 12px;
  top: 36px;
  width: 20px;
  height: 13px;
}

.widget-text,
.lang,
.clock {
  display: flex;
  flex-direction: column;
  margin-bottom: 2px;
  line-height: 32px;
}

.widget-text {
  letter-spacing: -0.4px;
}

.loss {
  color: #ff99a4;
}

.start {
  width: 46px;
  height: 46px;
}

.search {
  width: 440px;
  height: 64px;
  margin-left: 27px;
  padding: 0 17px 0 21px;
  border: 2px solid rgba(255, 255, 255, 0.13);
  border-radius: 32px;
  background: rgba(255, 255, 255, 0.16);
  background-clip: padding-box;
  display: flex;
  align-items: center;
}

.glass {
  width: 30px;
  height: 30px;
}

.search span {
  flex: 1;
  margin-left: 20px;
  font-size: 27.500px;
  letter-spacing: -0.4px;
  color: #d4d6e2;
}

.smoothie {
  width: 84px;
  height: 40px;
}

.apps {
  display: flex;
  margin-left: 4px;
}

.app {
  position: relative;
  width: 80px;
  height: 80px;
  margin: 0 4px;
  border: 2px solid transparent;
  border-radius: 9px;
  display: flex;
  align-items: center;
  justify-content: center;
}

.app svg {
  width: 48px;
  height: 48px;
}

.app.active {
  border-color: rgba(255, 255, 255, 0.06);
  background: rgba(255, 255, 255, 0.08);
  background-clip: padding-box;
}

.app.running::after,
.app.active::after {
  content: "";
  position: absolute;
  left: 32px;
  bottom: 0;
  width: 12px;
  height: 6px;
  border-radius: 3px;
  background: #9a9aa2;
}

.app.active::after {
  left: 22px;
  width: 32px;
  background: #4cc2ff;
}

.tray {
  margin-left: auto;
  margin-right: 42px;
  display: flex;
  align-items: center;
}

.chevron {
  width: 24px;
  height: 14px;
}

.lang {
  width: 80px;
  margin-left: 24px;
  text-align: center;
}

.wifi {
  width: 32px;
  height: 24px;
  margin: 0 16px 0 20px;
}

.mute {
  width: 30px;
  height: 24px;
  margin-right: 18px;
}

.battery {
  width: 32px;
  height: 22px;
}

.clock {
  width: 156px;
  text-align: right;
  letter-spacing: 0;
}

.bell {
  width: 28px;
  height: 30px;
  margin-left: 17px;
}
</style>
